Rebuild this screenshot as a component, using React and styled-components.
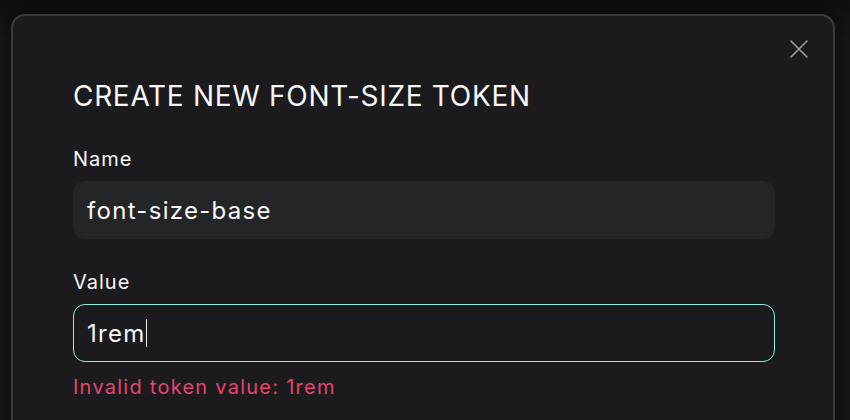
import React from "react";
import styled, { createGlobalStyle } from "styled-components";

const Global = createGlobalStyle`
  html, body { margin: 0; padding: 0; background: #141415; }
  body { font-family: Inter, "Noto Sans", sans-serif; color: #f4f4f4; overflow: hidden; }
`;

const Page = styled.div`
  padding: 14px 15px 0 11px;
  height: 420px;
  box-sizing: border-box;
  background: linear-gradient(#0f0f10, #161617 40px, #161617);
`;

const Modal = styled.div`
  position: relative;
  box-sizing: border-box;
  min-height: 500px;
  background: #1b1b1d;
  border: 2px solid #383e3d;
  border-radius: 14px;
  padding: 63px 58px 0 60px;
  box-shadow: 0 -4px 18px rgba(0, 0, 0, 0.45);
`;

const Close = styled.button`
  position: absolute;
  top: 24px;
  right: 25px;
  width: 18px;
  height: 18px;
  padding: 0;
  border: 0;
  background: transparent;
  color: #98a2a2;
  display: flex;
  cursor: pointer;
`;

const Title = styled.h2`
  margin: 0 0 34px;
  font-size: 28px;
  line-height: 34px;
  font-weight: 400;
  letter-spacing: 0.7px;
  color: #f7f7f7;
`;

const Field = styled.div`
  display: flex;
  flex-direction: column;
  gap: 10px;
  margin-bottom: ${(p) => p.$mb || 0}px;
`;

const Label = styled.label`
  font-size: 20px;
  line-height: 24px;
  font-weight: 400;
  letter-spacing: 1px;
  color: #f6f6f6;
`;

const Input = styled.div`
  box-sizing: border-box;
  height: 58px;
  display: flex;
  align-items: center;
  padding: 0 13px;
  border-radius: 12px;
  border: 1px solid ${(p) => (p.$focused ? "#8eeee4" : "#242527")};
  background: ${(p) => (p.$focused ? "#1b1b1d" : "#242527")};
  font-size: 24px;
  letter-spacing: 1.3px;
  color: #f8f8f8;
`;

const Caret = styled.span`
  display: inline-block;
  width: 1.5px;
  height: 28px;
  background: #f0f0f0;
`;

const Error = styled.div`
  margin-top: 13px;
  font-size: 20px;
  line-height: 24px;
  letter-spacing: 1.25px;
  color: #e6456f;
`;

export default function App() {
  return (
    <>
      <Global />
      <Page>
        <Modal>
          <Close aria-label="Close">
            <svg width="18" height="18" viewBox="0 0 18 18" fill="none" stroke="currentColor" strokeWidth="1.6" strokeLinecap="round">
              <path d="M1 1 L17 17 M17 1 L1 17" />
            </svg>
          </Close>
          <Title>CREATE NEW FONT-SIZE TOKEN</Title>
          <Field $mb={31}>
            <Label>Name</Label>
            <Input>font-size-base</Input>
          </Field>
          <Field>
            <Label>Value</Label>
            <Input $focused>
              1rem
              <Caret />
            </Input>
          </Field>
          <Error>Invalid token value: 1rem</Error>
        </Modal>
      </Page>
    </>
  );
}
